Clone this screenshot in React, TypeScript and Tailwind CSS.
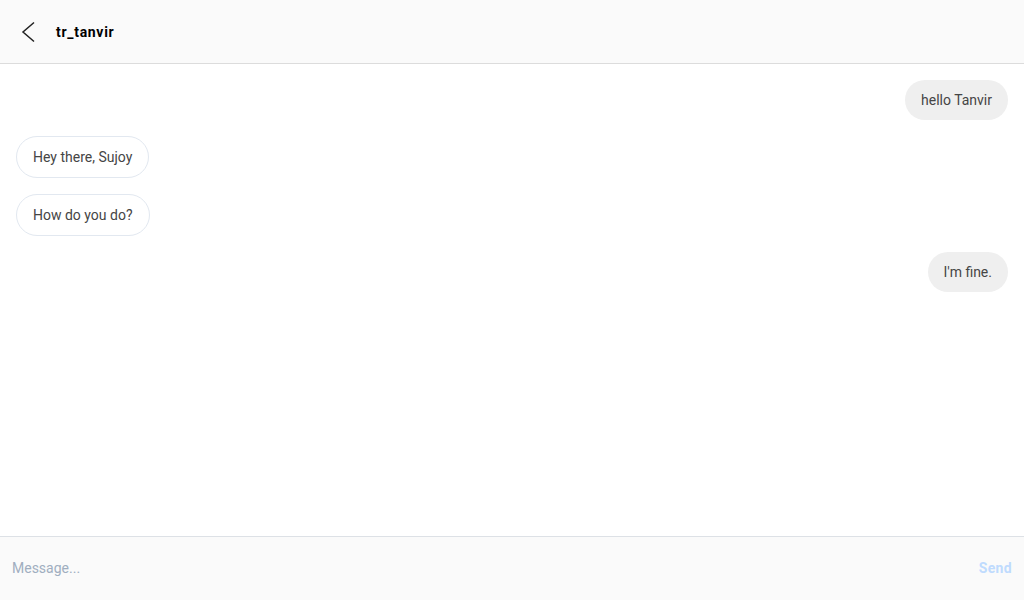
type Message = { text: string; mine: boolean };

const MESSAGES: Message[] = [
    { text: "hello Tanvir", mine: true },
    { text: "Hey there, Sujoy", mine: false },
    { text: "How do you do?", mine: false },
    { text: "I'm fine.", mine: true }
];

function Bubble({ text, mine }: Message) {
    return (
        <div className={`flex ${mine ? "justify-end" : "justify-start"}`}>
            <p
                className={`rounded-full px-4 py-2.5 text-sm leading-5 text-[#454545] ${mine ? "bg-[#efefef]" : "border border-[#e2e8f0] bg-white"}`}
            >
                {text}
            </p>
        </div>
    );
}

export default function App() {
    return (
        <div className="flex h-[600px] w-full flex-col bg-white font-['Roboto',sans-serif]">
            {/* Header */}
            <header className="flex h-16 shrink-0 items-center gap-5 border-b border-[#dcdcdc] bg-[#fafafa] px-4">
                <button className="flex size-5 items-center justify-center text-[#222]">
                    <svg viewBox="0 0 20 24" className="h-6 w-5" fill="none" stroke="currentColor" strokeWidth={1.5}>
                        <path d="M18 2.5 L7 12 L18 21.5" />
                    </svg>
                </button>
                <h1 className="text-sm font-bold tracking-wider text-black">tr_tanvir</h1>
            </header>

            {/* Messages */}
            <main className="flex flex-1 flex-col gap-4 overflow-y-auto p-4">
                {MESSAGES.map((m, i) => (
                    <Bubble key={i} {...m} />
                ))}
            </main>

            {/* Composer */}
            <footer className="flex h-16 shrink-0 items-center gap-2 border-t border-[#dde1e6] bg-[#fafafa] px-3 pb-0.5">
                <input
                    className="flex-1 bg-transparent text-sm text-[#404040] outline-none placeholder:text-[#a0aec0]"
                    placeholder="Message..."
                />
                <button className="text-sm font-bold tracking-wide text-[#bfdbfe]">Send</button>
            </footer>
        </div>
    );
}
